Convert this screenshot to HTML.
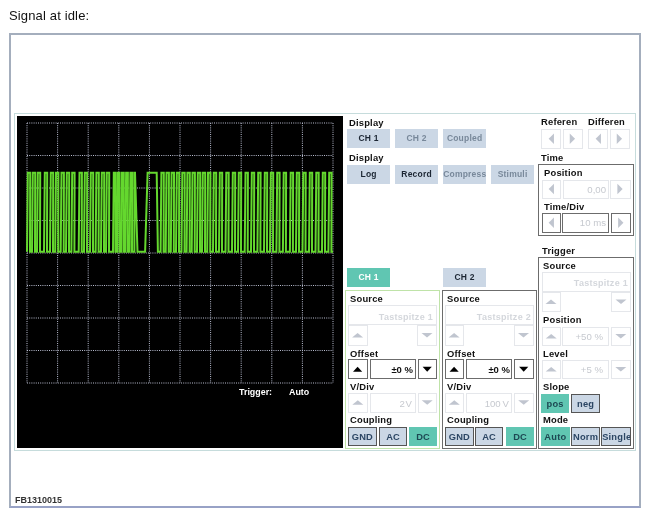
<!DOCTYPE html>
<html><head><meta charset="utf-8">
<style>
html,body{margin:0;padding:0;background:#fff;}
body{width:649px;height:516px;position:relative;overflow:hidden;font-family:"Liberation Sans",sans-serif;}
.t,.btn{will-change:transform;}
.t{position:absolute;white-space:nowrap;line-height:1;}
.b{position:absolute;box-sizing:border-box;}
.btn{position:absolute;box-sizing:border-box;text-align:center;font-weight:bold;white-space:nowrap;overflow:hidden;letter-spacing:0.2px;text-indent:0.2px;}
.scope{position:absolute;left:0;top:0;}
.g{stroke:#b9bdd0;stroke-width:1;stroke-dasharray:1 1.2;}
</style></head><body>
<div class="t" style="left:9px;top:7.5px;font-size:13px;line-height:15px;color:#111;letter-spacing:0.15px">Signal at idle:</div>
<div class="b" style="left:9px;top:33px;width:632px;height:475px;border:2px solid #a4aebd;border-bottom-color:#98a2c6;"></div>
<div class="b" style="left:14px;top:113px;width:622px;height:338px;border:1px solid #c6dcdc;"></div>
<div class="b" style="left:17px;top:116px;width:326px;height:332px;background:#000;"></div>
<svg class="scope" width="649" height="516" viewBox="0 0 649 516"><line x1="27.0" y1="123" x2="27.0" y2="383" class="g"/><line x1="57.6" y1="123" x2="57.6" y2="383" class="g"/><line x1="88.2" y1="123" x2="88.2" y2="383" class="g"/><line x1="118.8" y1="123" x2="118.8" y2="383" class="g"/><line x1="149.4" y1="123" x2="149.4" y2="383" class="g"/><line x1="180.0" y1="123" x2="180.0" y2="383" class="g"/><line x1="210.6" y1="123" x2="210.6" y2="383" class="g"/><line x1="241.2" y1="123" x2="241.2" y2="383" class="g"/><line x1="271.8" y1="123" x2="271.8" y2="383" class="g"/><line x1="302.4" y1="123" x2="302.4" y2="383" class="g"/><line x1="333.0" y1="123" x2="333.0" y2="383" class="g"/><line x1="27" y1="123.0" x2="333" y2="123.0" class="g"/><line x1="27" y1="155.5" x2="333" y2="155.5" class="g"/><line x1="27" y1="188.0" x2="333" y2="188.0" class="g"/><line x1="27" y1="220.5" x2="333" y2="220.5" class="g"/><line x1="27" y1="253.0" x2="333" y2="253.0" class="g"/><line x1="27" y1="285.5" x2="333" y2="285.5" class="g"/><line x1="27" y1="318.0" x2="333" y2="318.0" class="g"/><line x1="27" y1="350.5" x2="333" y2="350.5" class="g"/><line x1="27" y1="383.0" x2="333" y2="383.0" class="g"/><path d="M27,251.8 L27.0,251.8 L27.8,172.8 L30.2,172.8 L30.0,251.8 L32.0,251.8 L32.8,172.8 L35.2,172.8 L35.0,251.8 L37.0,251.8 L37.8,172.8 L40.2,172.8 L40.0,251.8 L44.0,251.8 L44.8,172.8 L47.2,172.8 L47.0,251.8 L50.0,251.8 L50.8,172.8 L53.2,172.8 L53.0,251.8 L55.2,251.8 L56.0,172.8 L58.4,172.8 L58.2,251.8 L60.7,251.8 L61.5,172.8 L63.9,172.8 L63.7,251.8 L66.0,251.8 L66.8,172.8 L69.2,172.8 L69.0,251.8 L71.4,251.8 L72.2,172.8 L74.6,172.8 L74.4,251.8 L78.7,251.8 L79.5,172.8 L81.9,172.8 L81.7,251.8 L84.0,251.8 L84.8,172.8 L87.2,172.8 L87.0,251.8 L90.0,251.8 L90.8,172.8 L93.2,172.8 L93.0,251.8 L95.6,251.8 L96.4,172.8 L98.8,172.8 L98.6,251.8 L101.0,251.8 L101.8,172.8 L104.2,172.8 L104.0,251.8 L106.0,251.8 L106.8,172.8 L109.2,172.8 L109.0,251.8 L113.0,251.8 L113.8,172.8 L115.6,172.8 L115.4,251.8 L117.0,251.8 L117.8,172.8 L119.6,172.8 L119.4,251.8 L121.2,251.8 L122.0,172.8 L123.8,172.8 L123.6,251.8 L125.3,251.8 L126.1,172.8 L127.9,172.8 L127.7,251.8 L129.6,251.8 L130.4,172.8 L132.2,172.8 L132.0,251.8 L134.4,251.8 L134.4,172.8 L135.0,172.8 L137.5,251.8 L145.1,251.8 L147.6,172.8 L156.7,172.8 L157.9,251.8 L160.6,251.8 L161.4,172.8 L163.8,172.8 L163.6,251.8 L165.7,251.8 L166.5,172.8 L168.9,172.8 L168.7,251.8 L170.8,251.8 L171.6,172.8 L174.0,172.8 L173.8,251.8 L176.0,251.8 L176.8,172.8 L179.2,172.8 L179.0,251.8 L181.5,251.8 L182.3,172.8 L184.7,172.8 L184.5,251.8 L186.6,251.8 L187.4,172.8 L189.8,172.8 L189.6,251.8 L191.7,251.8 L192.5,172.8 L194.9,172.8 L194.7,251.8 L197.0,251.8 L197.8,172.8 L200.2,172.8 L200.0,251.8 L202.0,251.8 L202.8,172.8 L205.2,172.8 L205.0,251.8 L207.2,251.8 L208.0,172.8 L210.4,172.8 L210.2,251.8 L213.0,251.8 L213.8,172.8 L216.2,172.8 L216.0,251.8 L219.0,251.8 L219.8,172.8 L222.2,172.8 L222.0,251.8 L225.5,251.8 L226.3,172.8 L228.7,172.8 L228.5,251.8 L232.0,251.8 L232.8,172.8 L235.2,172.8 L235.0,251.8 L238.0,251.8 L238.8,172.8 L241.2,172.8 L241.0,251.8 L244.7,251.8 L245.5,172.8 L247.9,172.8 L247.7,251.8 L251.0,251.8 L251.8,172.8 L254.2,172.8 L254.0,251.8 L257.4,251.8 L258.2,172.8 L260.6,172.8 L260.4,251.8 L264.0,251.8 L264.8,172.8 L267.2,172.8 L267.0,251.8 L270.0,251.8 L270.8,172.8 L273.2,172.8 L273.0,251.8 L276.4,251.8 L277.2,172.8 L279.6,172.8 L279.4,251.8 L282.9,251.8 L283.7,172.8 L286.1,172.8 L285.9,251.8 L289.9,251.8 L290.7,172.8 L293.1,172.8 L292.9,251.8 L296.0,251.8 L296.8,172.8 L299.2,172.8 L299.0,251.8 L302.5,251.8 L303.3,172.8 L305.7,172.8 L305.5,251.8 L309.0,251.8 L309.8,172.8 L312.2,172.8 L312.0,251.8 L315.5,251.8 L316.3,172.8 L318.7,172.8 L318.5,251.8 L322.0,251.8 L322.8,172.8 L325.2,172.8 L325.0,251.8 L328.4,251.8 L329.2,172.8 L331.6,172.8 L331.4,251.8 L333,251.8" fill="none" stroke="#64d82e" stroke-width="2" stroke-linejoin="miter"/></svg>
<div class="t" style="left:238.5px;top:388.3px;font-size:8.9px;color:#fff;font-weight:bold">Trigger:</div>
<div class="t" style="left:289px;top:388.3px;font-size:8.9px;color:#fff;font-weight:bold">Auto</div>
<div class="t" style="left:349.0px;top:118.49px;font-size:9.4px;color:#111;font-weight:bold;letter-spacing:0.2px">Display</div><div class="btn" style="left:347px;top:129px;width:43px;height:19px;background:#cbd7e5;color:#1c2633;font-size:8.5px;line-height:19px;border:0;">CH 1</div><div class="btn" style="left:395px;top:129px;width:43px;height:19px;background:#cbd7e5;color:#78889a;font-size:8.5px;line-height:19px;border:0;">CH 2</div><div class="btn" style="left:443px;top:129px;width:43px;height:19px;background:#cbd7e5;color:#78889a;font-size:8.5px;line-height:19px;border:0;">Coupled</div><div class="t" style="left:349.0px;top:153.49px;font-size:9.4px;color:#111;font-weight:bold;letter-spacing:0.2px">Display</div><div class="btn" style="left:347px;top:165px;width:43px;height:19px;background:#cbd7e5;color:#1c2633;font-size:8.5px;line-height:19px;border:0;">Log</div><div class="btn" style="left:395px;top:165px;width:43px;height:19px;background:#cbd7e5;color:#1c2633;font-size:8.5px;line-height:19px;border:0;">Record</div><div class="btn" style="left:443px;top:165px;width:43px;height:19px;background:#cbd7e5;color:#78889a;font-size:8.5px;line-height:19px;border:0;">Compress</div><div class="btn" style="left:491px;top:165px;width:43px;height:19px;background:#cbd7e5;color:#78889a;font-size:8.5px;line-height:19px;border:0;">Stimuli</div><div class="t" style="left:541.0px;top:117.19px;font-size:9.4px;color:#111;font-weight:bold;letter-spacing:0.2px">Referen</div><div class="t" style="left:588.0px;top:117.19px;font-size:9.4px;color:#111;font-weight:bold;letter-spacing:0.2px">Differen</div><div class="b" style="left:541px;top:129px;width:20px;height:19.5px;background:transparent;border:1px solid #e5e7eb;"></div><div class="b" style="left:563px;top:129px;width:20px;height:19.5px;background:transparent;border:1px solid #e5e7eb;"></div><div class="b" style="left:588px;top:129px;width:20px;height:19.5px;background:transparent;border:1px solid #e5e7eb;"></div><div class="b" style="left:610px;top:129px;width:20px;height:19.5px;background:transparent;border:1px solid #e5e7eb;"></div><div class="t" style="left:541.0px;top:153.19px;font-size:9.4px;color:#111;font-weight:bold;letter-spacing:0.2px">Time</div><div class="b" style="left:538px;top:164px;width:96px;height:72px;background:transparent;border:1px solid #6c6c6c;"></div><div class="t" style="left:543.5px;top:168.19px;font-size:9.4px;color:#111;font-weight:bold;letter-spacing:0.2px">Position</div><div class="b" style="left:541.5px;top:179.5px;width:19.5px;height:19.0px;background:transparent;border:1px solid #e5e7eb;"></div><div class="b" style="left:562.5px;top:179.5px;width:46.0px;height:19.0px;background:transparent;border:1px solid #e5e7eb;"></div><div class="t" style="left:406px;width:200px;text-align:right;top:184.81px;font-size:9.6px;color:#c6c9cf;font-weight:normal;letter-spacing:0px">0,00</div><div class="b" style="left:609.5px;top:179.5px;width:21.0px;height:19.0px;background:transparent;border:1px solid #e5e7eb;"></div><div class="t" style="left:543.5px;top:201.69px;font-size:9.4px;color:#111;font-weight:bold;letter-spacing:0.2px">Time/Div</div><div class="b" style="left:541.5px;top:213px;width:19.5px;height:19.5px;background:transparent;border:1px solid #6c6c6c;"></div><div class="b" style="left:562px;top:213px;width:47px;height:19.5px;background:transparent;border:1px solid #6c6c6c;"></div><div class="t" style="left:405.5px;width:200px;text-align:right;top:218.31px;font-size:9.6px;color:#c6c9cf;font-weight:normal;letter-spacing:0px">10 ms</div><div class="b" style="left:611px;top:213px;width:19.5px;height:19.5px;background:transparent;border:1px solid #6c6c6c;"></div><div class="t" style="left:541.5px;top:245.69px;font-size:9.4px;color:#111;font-weight:bold;letter-spacing:0.2px">Trigger</div><div class="b" style="left:538px;top:257px;width:96px;height:191.5px;background:transparent;border:1px solid #6c6c6c;"></div><div class="t" style="left:543.3px;top:260.69px;font-size:9.4px;color:#111;font-weight:bold;letter-spacing:0.2px">Source</div><div class="b" style="left:541.5px;top:272px;width:89.5px;height:19.5px;background:transparent;border:1px solid #e5e7eb;"></div><div class="t" style="left:428px;width:200px;text-align:right;top:278.86px;font-size:9px;color:#d4d7dc;font-weight:bold;letter-spacing:0.28px">Tastspitze 1</div><div class="b" style="left:541.5px;top:292px;width:19.0px;height:19.5px;background:transparent;border:1px solid #e5e7eb;"></div><div class="b" style="left:611px;top:292px;width:20px;height:19.5px;background:transparent;border:1px solid #e5e7eb;"></div><div class="t" style="left:543.3px;top:315.19px;font-size:9.4px;color:#111;font-weight:bold;letter-spacing:0.2px">Position</div><div class="b" style="left:541.5px;top:326.5px;width:19.5px;height:19.5px;background:transparent;border:1px solid #e5e7eb;"></div><div class="b" style="left:562px;top:326.5px;width:46.5px;height:19.5px;background:transparent;border:1px solid #e5e7eb;"></div><div class="t" style="left:402.5px;width:200px;text-align:right;top:332.31px;font-size:9.6px;color:#c6c9cf;font-weight:normal;letter-spacing:0px">+50 %</div><div class="b" style="left:611px;top:326.5px;width:19.5px;height:19.5px;background:transparent;border:1px solid #e5e7eb;"></div><div class="t" style="left:543.3px;top:348.69px;font-size:9.4px;color:#111;font-weight:bold;letter-spacing:0.2px">Level</div><div class="b" style="left:541.5px;top:359.5px;width:19.5px;height:19.5px;background:transparent;border:1px solid #e5e7eb;"></div><div class="b" style="left:562px;top:359.5px;width:46.5px;height:19.5px;background:transparent;border:1px solid #e5e7eb;"></div><div class="t" style="left:402.5px;width:200px;text-align:right;top:365.31px;font-size:9.6px;color:#c6c9cf;font-weight:normal;letter-spacing:0px">+5 %</div><div class="b" style="left:611px;top:359.5px;width:19.5px;height:19.5px;background:transparent;border:1px solid #e5e7eb;"></div><div class="t" style="left:543.3px;top:382.19px;font-size:9.4px;color:#111;font-weight:bold;letter-spacing:0.2px">Slope</div><div class="btn" style="left:541px;top:393.5px;width:28px;height:18.5px;background:#60c6b2;color:#1d4853;font-size:9.3px;line-height:18.5px;border:0;padding-top:1px;">pos</div><div class="btn" style="left:571px;top:393.5px;width:29px;height:19.0px;background:#cbd7e5;color:#2c4664;font-size:9.3px;line-height:17.0px;border:1px solid #555;padding-top:1px;">neg</div><div class="t" style="left:543.3px;top:415.19px;font-size:9.4px;color:#111;font-weight:bold;letter-spacing:0.2px">Mode</div><div class="btn" style="left:541px;top:426.5px;width:28.5px;height:19.0px;background:#60c6b2;color:#1d4853;font-size:9.3px;line-height:19.0px;border:0;padding-top:1px;">Auto</div><div class="btn" style="left:571px;top:426.5px;width:29px;height:19.0px;background:#cbd7e5;color:#2c4664;font-size:9.3px;line-height:17.0px;border:1px solid #555;padding-top:1px;">Norm</div><div class="btn" style="left:601px;top:426.5px;width:30px;height:19.0px;background:#cbd7e5;color:#2c4664;font-size:9.3px;line-height:17.0px;border:1px solid #555;padding-top:1px;">Single</div><div class="btn" style="left:347px;top:268px;width:43px;height:18.5px;background:#60c6b2;color:#ffffff;font-size:8.5px;line-height:18.5px;border:0;">CH 1</div><div class="b" style="left:345px;top:290px;width:95px;height:158.5px;background:transparent;border:1px solid #bfe3a8;"></div><div class="t" style="left:350.0px;top:294.19px;font-size:9.4px;color:#111;font-weight:bold;letter-spacing:0.2px">Source</div><div class="b" style="left:348px;top:305px;width:89px;height:19.5px;background:transparent;border:1px solid #e5e7eb;"></div><div class="t" style="left:233px;width:200px;text-align:right;top:312.86px;font-size:9px;color:#d4d7dc;font-weight:bold;letter-spacing:0.28px">Tastspitze 1</div><div class="b" style="left:348px;top:324.5px;width:19.5px;height:21.0px;background:transparent;border:1px solid #e5e7eb;"></div><div class="b" style="left:417px;top:324.5px;width:20px;height:21.0px;background:transparent;border:1px solid #e5e7eb;"></div><div class="t" style="left:350.0px;top:348.69px;font-size:9.4px;color:#111;font-weight:bold;letter-spacing:0.2px">Offset</div><div class="b" style="left:348px;top:359px;width:19.5px;height:20px;background:transparent;border:1px solid #6c6c6c;"></div><div class="b" style="left:369.5px;top:359px;width:46.0px;height:20px;background:transparent;border:1px solid #6c6c6c;"></div><div class="t" style="left:213px;width:200px;text-align:right;top:365.40px;font-size:9.5px;color:#111;font-weight:bold;letter-spacing:0px">±0 %</div><div class="b" style="left:417.5px;top:359px;width:19.5px;height:20px;background:transparent;border:1px solid #6c6c6c;"></div><div class="t" style="left:350.0px;top:381.69px;font-size:9.4px;color:#111;font-weight:bold;letter-spacing:0.2px">V/Div</div><div class="b" style="left:348px;top:392.5px;width:19.5px;height:20.0px;background:transparent;border:1px solid #e5e7eb;"></div><div class="b" style="left:369.5px;top:392.5px;width:46.0px;height:20.0px;background:transparent;border:1px solid #e5e7eb;"></div><div class="t" style="left:212px;width:200px;text-align:right;top:398.81px;font-size:9.6px;color:#c6c9cf;font-weight:normal;letter-spacing:0px">2&#8202;V</div><div class="b" style="left:417.5px;top:392.5px;width:19.5px;height:20.0px;background:transparent;border:1px solid #e5e7eb;"></div><div class="t" style="left:350.0px;top:415.19px;font-size:9.4px;color:#111;font-weight:bold;letter-spacing:0.2px">Coupling</div><div class="btn" style="left:348px;top:426.5px;width:28.5px;height:19.0px;background:#cbd7e5;color:#2c4664;font-size:9.3px;line-height:17.0px;border:1px solid #555;padding-top:1px;">GND</div><div class="btn" style="left:378.5px;top:426.5px;width:28.0px;height:19.0px;background:#cbd7e5;color:#2c4664;font-size:9.3px;line-height:17.0px;border:1px solid #555;padding-top:1px;">AC</div><div class="btn" style="left:409px;top:426.5px;width:28px;height:19.0px;background:#60c6b2;color:#1d4853;font-size:9.3px;line-height:19.0px;border:0;padding-top:1px;">DC</div><div class="btn" style="left:443px;top:268px;width:43px;height:18.5px;background:#cbd7e5;color:#1c2633;font-size:8.5px;line-height:18.5px;border:0;">CH 2</div><div class="b" style="left:441.5px;top:290px;width:95.5px;height:158.5px;background:transparent;border:1px solid #6c6c6c;"></div><div class="t" style="left:446.5px;top:294.19px;font-size:9.4px;color:#111;font-weight:bold;letter-spacing:0.2px">Source</div><div class="b" style="left:444.5px;top:305px;width:89.0px;height:19.5px;background:transparent;border:1px solid #e5e7eb;"></div><div class="t" style="left:331px;width:200px;text-align:right;top:312.86px;font-size:9px;color:#d4d7dc;font-weight:bold;letter-spacing:0.28px">Tastspitze 2</div><div class="b" style="left:444.5px;top:324.5px;width:19.5px;height:21.0px;background:transparent;border:1px solid #e5e7eb;"></div><div class="b" style="left:513.5px;top:324.5px;width:20.0px;height:21.0px;background:transparent;border:1px solid #e5e7eb;"></div><div class="t" style="left:446.5px;top:348.69px;font-size:9.4px;color:#111;font-weight:bold;letter-spacing:0.2px">Offset</div><div class="b" style="left:444.5px;top:359px;width:19.5px;height:20px;background:transparent;border:1px solid #6c6c6c;"></div><div class="b" style="left:466.0px;top:359px;width:46.0px;height:20px;background:transparent;border:1px solid #6c6c6c;"></div><div class="t" style="left:309.5px;width:200px;text-align:right;top:365.40px;font-size:9.5px;color:#111;font-weight:bold;letter-spacing:0px">±0 %</div><div class="b" style="left:514.0px;top:359px;width:19.5px;height:20px;background:transparent;border:1px solid #6c6c6c;"></div><div class="t" style="left:446.5px;top:381.69px;font-size:9.4px;color:#111;font-weight:bold;letter-spacing:0.2px">V/Div</div><div class="b" style="left:444.5px;top:392.5px;width:19.5px;height:20.0px;background:transparent;border:1px solid #e5e7eb;"></div><div class="b" style="left:466.0px;top:392.5px;width:46.0px;height:20.0px;background:transparent;border:1px solid #e5e7eb;"></div><div class="t" style="left:308.5px;width:200px;text-align:right;top:398.81px;font-size:9.6px;color:#c6c9cf;font-weight:normal;letter-spacing:0px">100&#8201;V</div><div class="b" style="left:514.0px;top:392.5px;width:19.5px;height:20.0px;background:transparent;border:1px solid #e5e7eb;"></div><div class="t" style="left:446.5px;top:415.19px;font-size:9.4px;color:#111;font-weight:bold;letter-spacing:0.2px">Coupling</div><div class="btn" style="left:444.5px;top:426.5px;width:28.5px;height:19.0px;background:#cbd7e5;color:#2c4664;font-size:9.3px;line-height:17.0px;border:1px solid #555;padding-top:1px;">GND</div><div class="btn" style="left:475.0px;top:426.5px;width:28.0px;height:19.0px;background:#cbd7e5;color:#2c4664;font-size:9.3px;line-height:17.0px;border:1px solid #555;padding-top:1px;">AC</div><div class="btn" style="left:505.5px;top:426.5px;width:28.0px;height:19.0px;background:#60c6b2;color:#1d4853;font-size:9.3px;line-height:19.0px;border:0;padding-top:1px;">DC</div>
<svg class="scope" width="649" height="516" viewBox="0 0 649 516"><polygon points="553.9499999999999,133.45 553.9499999999999,143.95 548.65,138.7" fill="#c0c5cf"/><polygon points="569.75,133.45 569.75,143.95 575.05,138.7" fill="#c0c5cf"/><polygon points="600.9499999999999,133.45 600.9499999999999,143.95 595.65,138.7" fill="#c0c5cf"/><polygon points="616.75,133.45 616.75,143.95 622.05,138.7" fill="#c0c5cf"/><polygon points="553.9499999999999,183.75 553.9499999999999,194.25 548.65,189" fill="#c0c5cf"/><polygon points="617.35,183.75 617.35,194.25 622.65,189" fill="#c0c5cf"/><polygon points="553.9499999999999,217.55 553.9499999999999,228.05 548.65,222.8" fill="#c0c5cf"/><polygon points="618.15,217.55 618.15,228.05 623.4499999999999,222.8" fill="#c0c5cf"/><polygon points="545.5,304.1 556.5,304.1 551,299.5" fill="#c0c5cf"/><polygon points="615.5,299.5 626.5,299.5 621,304.1" fill="#c0c5cf"/><polygon points="545.7,338.5 556.7,338.5 551.2,333.9" fill="#c0c5cf"/><polygon points="615.3,333.9 626.3,333.9 620.8,338.5" fill="#c0c5cf"/><polygon points="545.7,371.5 556.7,371.5 551.2,366.9" fill="#c0c5cf"/><polygon points="615.3,366.9 626.3,366.9 620.8,371.5" fill="#c0c5cf"/><polygon points="352.1,337.6 363.1,337.6 357.6,333.0" fill="#c0c5cf"/><polygon points="421.5,333.0 432.5,333.0 427,337.6" fill="#c0c5cf"/><polygon points="353.0,371.8 362.20000000000005,371.8 357.6,366.8" fill="#000"/><polygon points="422.59999999999997,366.8 431.8,366.8 427.2,371.8" fill="#000"/><polygon points="352.3,404.8 363.3,404.8 357.8,400.2" fill="#c0c5cf"/><polygon points="421.7,400.2 432.7,400.2 427.2,404.8" fill="#c0c5cf"/><polygon points="448.6,337.6 459.6,337.6 454.1,333.0" fill="#c0c5cf"/><polygon points="518.0,333.0 529.0,333.0 523.5,337.6" fill="#c0c5cf"/><polygon points="449.5,371.8 458.70000000000005,371.8 454.1,366.8" fill="#000"/><polygon points="519.1,366.8 528.3000000000001,366.8 523.7,371.8" fill="#000"/><polygon points="448.8,404.8 459.8,404.8 454.3,400.2" fill="#c0c5cf"/><polygon points="518.2,400.2 529.2,400.2 523.7,404.8" fill="#c0c5cf"/></svg>
<div class="t" style="left:14.5px;top:495.5px;font-size:9px;color:#333;font-weight:bold">FB1310015</div>
</body></html>
